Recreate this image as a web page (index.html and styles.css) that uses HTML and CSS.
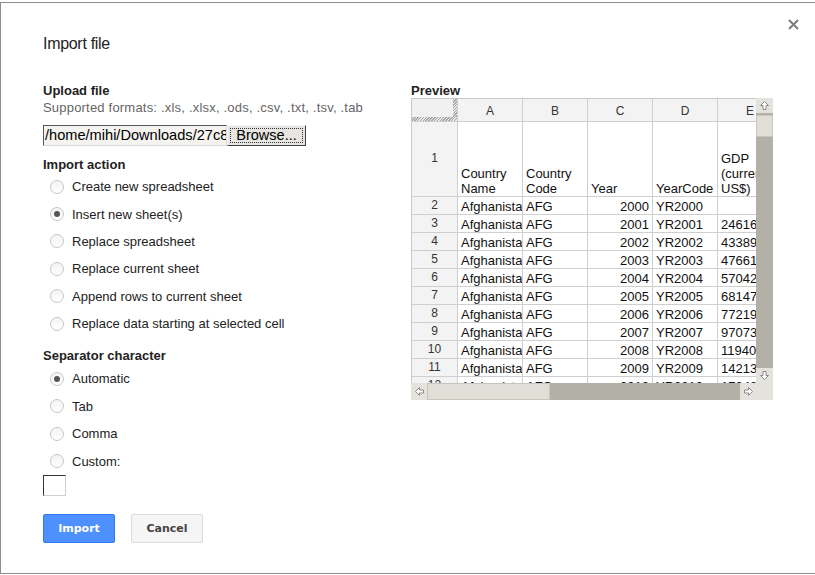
FILE: index.html
```html
<!DOCTYPE html>
<html>
<head>
<meta charset="utf-8">
<title>Import file</title>
<link rel="stylesheet" href="styles.css">
</head>
<body>
<div class="dialog">
  <svg class="close" width="11" height="11" viewBox="0 0 11 11"><path d="M1 1L10 10M10 1L1 10" stroke="#7c7c7c" stroke-width="2"/></svg>
  <h1 class="title">Import file</h1>
  <div class="cols">
    <div class="left">
      <div class="h">Upload file</div>
      <div class="formats">Supported formats: .xls, .xlsx, .ods, .csv, .txt, .tsv, .tab</div>
      <div class="file">
        <div class="file-text">/home/mihi/Downloads/27c8fd2e-data.csv</div>
        <div class="browse"><span>Browse...</span></div>
      </div>
      <div class="h h-action">Import action</div>
      <div class="radios">
        <div class="row"><span class="r"></span>Create new spreadsheet</div>
        <div class="row"><span class="r on"></span>Insert new sheet(s)</div>
        <div class="row"><span class="r"></span>Replace spreadsheet</div>
        <div class="row"><span class="r"></span>Replace current sheet</div>
        <div class="row"><span class="r"></span>Append rows to current sheet</div>
        <div class="row"><span class="r"></span>Replace data starting at selected cell</div>
      </div>
      <div class="h h-sep">Separator character</div>
      <div class="radios radios-sep">
        <div class="row"><span class="r on"></span>Automatic</div>
        <div class="row"><span class="r"></span>Tab</div>
        <div class="row"><span class="r"></span>Comma</div>
        <div class="row"><span class="r"></span>Custom:</div>
      </div>
      <div class="custom-box"></div>
      <div class="buttons">
        <button class="btn btn-primary">Import</button>
        <button class="btn btn-cancel">Cancel</button>
      </div>
    </div>
    <div class="right">
      <div class="h">Preview</div>
      <div class="sheetbox">
        <div class="viewport">
          <div class="sheet">
            <div class="corner"></div>
            <div class="ch">A</div><div class="ch">B</div><div class="ch">C</div><div class="ch">D</div><div class="ch">E</div><div class="ch">F</div>

            <div class="rh">1</div>
            <div class="c hdr">Country Name</div>
            <div class="c hdr">Country Code</div>
            <div class="c hdr">Year</div>
            <div class="c hdr">YearCode</div>
            <div class="c hdr">GDP (current US$)</div>
            <div class="c hdr"></div>

            <div class="rh">2</div><div class="c">Afghanistan</div><div class="c">AFG</div><div class="c num">2000</div><div class="c">YR2000</div><div class="c"></div><div class="c"></div>
            <div class="rh">3</div><div class="c">Afghanistan</div><div class="c">AFG</div><div class="c num">2001</div><div class="c">YR2001</div><div class="c">2461666315</div><div class="c"></div>
            <div class="rh">4</div><div class="c">Afghanistan</div><div class="c">AFG</div><div class="c num">2002</div><div class="c">YR2002</div><div class="c">4338907579</div><div class="c"></div>
            <div class="rh">5</div><div class="c">Afghanistan</div><div class="c">AFG</div><div class="c num">2003</div><div class="c">YR2003</div><div class="c">4766127272</div><div class="c"></div>
            <div class="rh">6</div><div class="c">Afghanistan</div><div class="c">AFG</div><div class="c num">2004</div><div class="c">YR2004</div><div class="c">5704202651</div><div class="c"></div>
            <div class="rh">7</div><div class="c">Afghanistan</div><div class="c">AFG</div><div class="c num">2005</div><div class="c">YR2005</div><div class="c">6814753581</div><div class="c"></div>
            <div class="rh">8</div><div class="c">Afghanistan</div><div class="c">AFG</div><div class="c num">2006</div><div class="c">YR2006</div><div class="c">7721931671</div><div class="c"></div>
            <div class="rh">9</div><div class="c">Afghanistan</div><div class="c">AFG</div><div class="c num">2007</div><div class="c">YR2007</div><div class="c">9707373721</div><div class="c"></div>
            <div class="rh">10</div><div class="c">Afghanistan</div><div class="c">AFG</div><div class="c num">2008</div><div class="c">YR2008</div><div class="c">11940296131</div><div class="c"></div>
            <div class="rh">11</div><div class="c">Afghanistan</div><div class="c">AFG</div><div class="c num">2009</div><div class="c">YR2009</div><div class="c">14213603457</div><div class="c"></div>
            <div class="rh">12</div><div class="c">Afghanistan</div><div class="c">AFG</div><div class="c num">2010</div><div class="c">YR2010</div><div class="c">17243206989</div><div class="c"></div>
          </div>
        </div>
        <div class="vbar">
          <div class="sbtn"><svg width="9" height="9" viewBox="0 0 9 9"><path d="M4.5 0.5L8.5 4.5H6V8.5H3V4.5H0.5Z" fill="#fff" stroke="#8a8a8a" stroke-width="1"/></svg></div>
          <div class="vthumb"><i class="grip"></i></div>
          <div class="vtrack"></div>
          <div class="sbtn"><svg width="9" height="9" viewBox="0 0 9 9"><path d="M4.5 8.5L8.5 4.5H6V0.5H3V4.5H0.5Z" fill="#fff" stroke="#8a8a8a" stroke-width="1"/></svg></div>
        </div>
        <div class="hbar">
          <div class="sbtn hbtn"><svg width="9" height="9" viewBox="0 0 9 9"><path d="M0.5 4.5L4.5 0.5V3H8.5V6H4.5V8.5Z" fill="#fff" stroke="#8a8a8a" stroke-width="1"/></svg></div>
          <div class="hthumb"><i class="grip"></i></div>
          <div class="htrack"></div>
          <div class="sbtn hbtn"><svg width="9" height="9" viewBox="0 0 9 9"><path d="M8.5 4.5L4.5 0.5V3H0.5V6H4.5V8.5Z" fill="#fff" stroke="#8a8a8a" stroke-width="1"/></svg></div>
        </div>
        <div class="scorner"></div>
      </div>
    </div>
  </div>
</div>
</body>
</html>
```
FILE: styles.css
```css
* { box-sizing: border-box; }
html, body { margin: 0; padding: 0; background: #fff; overflow: hidden; }
body {
  width: 815px;
  height: 575px;
  font-family: "Liberation Sans", Arial, sans-serif;
  font-size: 13px;
  color: #222;
}
.dialog {
  position: relative;
  margin-top: 2px;
  width: 840px;
  height: 572px;
  border: 1px solid #8e8e8e;
  border-right: none;
  padding: 31px 0 0 42px;
}
.close { position: absolute; left: 787px; top: 16px; }
.title {
  margin: 0;
  font-size: 16px;
  font-weight: normal;
  line-height: 20px;
  letter-spacing: -0.3px;
  color: #222;
}
.cols {
  display: grid;
  grid-template-columns: 368px 362px;
  margin-top: 29px;
}
.h { font-weight: bold; line-height: 16px; color: #222; }
.formats { color: #666; line-height: 16px; margin-top: 1px; white-space: nowrap; letter-spacing: 0.2px; }
.file { display: flex; margin-top: 9px; height: 21px; }
.file-text {
  width: 184px;
  height: 21px;
  background: #f4f3f0;
  border-top: 1px solid #555;
  border-left: 1px solid #555;
  border-right: 1px solid #d8d8d8;
  border-bottom: 1px solid #d8d8d8;
  padding-left: 1px;
  font-size: 14.6px;
  line-height: 19px;
  color: #000;
  white-space: nowrap;
  overflow: hidden;
}
.browse {
  width: 79px;
  height: 21px;
  background: #e6e5e1;
  border: 1px solid;
  border-color: #f8f8f8 #404040 #404040 #f8f8f8;
  padding: 2px;
  color: #000;
  font-size: 14.5px;
}
.browse span {
  display: block;
  height: 100%;
  border: 1px dotted #333;
  text-align: center;
  line-height: 13px;
}
.h-action { margin-top: 11px; }
.radios { display: flex; flex-direction: column; }
.row {
  height: 27.4px;
  display: flex;
  align-items: center;
  padding-left: 7px;
  gap: 8px;
  color: #222;
}
.r {
  width: 14px;
  height: 14px;
  border-radius: 50%;
  border: 1px solid #c6c6c6;
  background: linear-gradient(#f3f3f3, #fff);
  display: grid;
  place-items: center;
}
.r.on::after {
  content: "";
  width: 6px;
  height: 6px;
  border-radius: 50%;
  background: #555;
}
.h-sep { margin-top: 10.6px; }
.radios-sep { margin-top: 1.3px; }
.custom-box {
  width: 23px;
  height: 21px;
  border-top: 1px solid #333;
  border-left: 1px solid #333;
  border-right: 1px solid #d0d0d0;
  border-bottom: 1px solid #d0d0d0;
}
.buttons { display: flex; gap: 16px; margin-top: 18px; }
.btn {
  width: 72px;
  height: 29px;
  font-family: "DejaVu Sans", sans-serif;
  font-weight: bold;
  font-size: 11px;
  border-radius: 2px;
  padding: 0;
}
.btn-primary { background: #4d90fe; border: 1px solid #3079ed; color: #fff; }
.btn-cancel { background: #f5f5f5; border: 1px solid #dcdcdc; color: #444; }

/* Preview sheet */
.sheetbox {
  display: grid;
  grid-template-columns: 345px 17px;
  grid-template-rows: 285px 17px;
  width: 362px;
  margin-top: -1px;
}
.viewport {
  overflow: hidden;
  border-left: 1px solid #c8c8c8;
  border-top: 1px solid #c8c8c8;
  background: #fff;
}
.sheet {
  display: grid;
  grid-template-columns: 46px 65px 65px 65px 65px 65px 65px;
  grid-template-rows: 23px 75px repeat(11, 18px);
  width: 436px;
}
.sheet > div {
  border-right: 1px solid #cfcfcf;
  border-bottom: 1px solid #cfcfcf;
  overflow: hidden;
}
.corner {
  background:
    repeating-linear-gradient(135deg, #a8a8a8 0 1px, #e6e6e6 1px 2px) left bottom / 100% 4px no-repeat,
    repeating-linear-gradient(135deg, #a8a8a8 0 1px, #e6e6e6 1px 2px) right top / 4px 100% no-repeat,
    #f1f1f1;
}
.ch {
  background: #f3f3f3;
  text-align: center;
  font-size: 12px;
  line-height: 22px;
  padding-top: 1px;
  color: #333;
}
.rh {
  background: #f3f3f3;
  display: flex;
  align-items: center;
  justify-content: center;
  font-size: 12px;
  color: #333;
  padding-bottom: 2px;
}
.c {
  padding-left: 3px;
  padding-top: 1px;
  line-height: 17px;
  white-space: nowrap;
  color: #111;
}
.c.num { text-align: right; padding-right: 3px; padding-left: 0; }
.c.hdr {
  display: flex;
  align-items: flex-end;
  white-space: normal;
  line-height: 15px;
  padding-top: 0;
  padding-bottom: 0;
}

.vbar {
  display: flex;
  flex-direction: column;
  background: #b3b0a7;
}
.sbtn {
  height: 15px;
  flex: none;
  background: #e4e2dc;
  display: grid;
  place-items: center;
}
.vthumb {
  height: 22px;
  margin-top: 2px;
  background: #e0ded7;
  border: 1px solid #c8c5bc;
  display: grid;
  place-items: center;
}
.vtrack { flex: 1; }
.grip {
  display: block;
  width: 9px;
  height: 9px;
  background-image: radial-gradient(circle, #8d8d8d 0.6px, transparent 0.7px);
  background-size: 2px 2px;
}
.hbar {
  display: flex;
  background: #b3b0a7;
}
.hbtn { width: 16px; height: 17px; }
.hthumb {
  width: 123px;
  background: #e0ded7;
  border: 1px solid #c8c5bc;
  display: grid;
  place-items: center;
}
.htrack { flex: 1; }
.scorner { background: #e4e2dc; }
```
